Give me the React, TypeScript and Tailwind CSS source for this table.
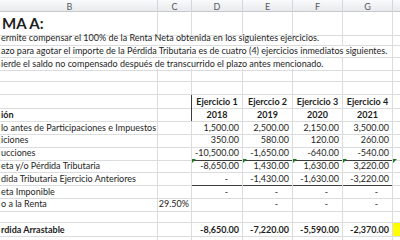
import React from 'react'

const grid = 'grid grid-cols-[176px_34px_51px_50px_50px_50px_50px]'
const line = 'border-[#dadcdd]'
const dark = 'border-[#3c3c3c]'

type CellProps = {
  children?: React.ReactNode
  className?: string
}

function Cell({ children, className = '' }: CellProps) {
  return (
    <div className={`relative flex items-center whitespace-nowrap border-r border-b ${line} ${className}`}>
      {children}
    </div>
  )
}

function Tri() {
  return <span className="absolute left-0 top-0 h-0 w-0 border-t-[4px] border-r-[4px] border-t-[#1f7a1f] border-r-transparent" />
}

const labelPad = 'pl-[19px]'

type Row = {
  label?: string
  bold?: boolean
  c?: string
  vals: string[]
  h?: string
  darkBottom?: boolean
  tri?: boolean
}

const rows: Row[] = [
  { label: 'lo antes de Participaciones e Impuestos', vals: ['1,500.00', '2,500.00', '2,150.00', '3,500.00'] },
  { label: 'iciones', vals: ['350.00', '580.00', '120.00', '260.00'] },
  { label: 'ucciones', vals: ['-10,500.00', '-1,650.00', '-640.00', '-540.00'], darkBottom: true },
  { label: 'eta y/o Pérdida Tributaria', vals: ['-8,650.00', '1,430.00', '1,630.00', '3,220.00'], tri: true },
  { label: 'dida Tributaria Ejercicio Anteriores', vals: ['-', '-1,430.00', '-1,630.00', '-3,220.00'], darkBottom: true },
  { label: 'eta Imponible', vals: ['-', '-', '-', '-'] },
  { label: 'o a la Renta', c: '29.50%', vals: ['', '-', '-', '-'] },
  { vals: ['', '', '', ''] },
  { label: 'rdida Arrastable', bold: true, vals: ['-8,650.00', '-7,220.00', '-5,590.00', '-2,370.00'], h: 'yellow' },
]

function Value({ v, className = '' }: { v: string; className?: string }) {
  const pad = v === '-' ? 'pr-[14px]' : 'pr-[3px]'
  return <Cell className={`justify-end ${pad} ${className}`}>{v}</Cell>
}

export default function App() {
  const headers = ['B', 'C', 'D', 'E', 'F', 'G', '']
  return (
    <div className="w-[400px] h-[240px] overflow-hidden bg-white font-['Lato','Liberation_Sans',sans-serif] text-[9px] text-[#1e1e1e]">
      <div className="ml-[-18px]">
        {/* column letters */}
        <div className={`${grid} h-[12px] bg-gradient-to-b from-[#f9fafb] to-[#e8eaed] border-b border-[#c6c9ce]`}>
          {headers.map((h, i) => (
            <div key={i} className="flex items-center justify-center border-r border-[#d3d6da] text-[9px] text-[#55595f]">
              {h}
            </div>
          ))}
        </div>

        {/* title */}
        <div className={`${grid} h-[19px]`}>
          <Cell className={`${labelPad} text-[15px] font-bold`}>
            <span className="pl-[1px]">MA A:</span>
          </Cell>
          <Cell />
          <Cell />
          <Cell />
          <Cell />
          <Cell />
          <Cell />
        </div>

        {/* notes */}
        <div className={`${grid} h-[12.8px]`}>
          <Cell className={`${labelPad} col-span-5`}>ermite compensar el 100% de la Renta Neta obtenida en los siguientes ejercicios.</Cell>
          <Cell />
          <Cell />
        </div>
        <div className={`${grid} h-[12.8px]`}>
          <Cell className={`${labelPad} col-span-6`}>azo para agotar el importe de la Pérdida Tributaria es de cuatro (4) ejercicios inmediatos siguientes.</Cell>
          <Cell />
        </div>
        <div className={`${grid} h-[12.8px]`}>
          <Cell className={`${labelPad} col-span-5`}>ierde el saldo no compensado después de transcurrido el plazo antes mencionado.</Cell>
          <Cell />
          <Cell />
        </div>

        {/* blank rows */}
        <div className={`${grid} h-[12.8px]`}>
          {headers.map((h, i) => (
            <Cell key={i} />
          ))}
        </div>
        <div className={`${grid} h-[12.8px]`}>
          <Cell />
          <Cell />
          <Cell className={dark} />
          <Cell className={dark} />
          <Cell className={dark} />
          <Cell className={dark} />
          <Cell />
        </div>

        {/* table head */}
        <div className={`${grid} h-[12.8px] font-bold`}>
          <Cell />
          <Cell className="border-r-[#3c3c3c]" />
          {['Ejercicio 1', 'Ejerccio 2', 'Ejercicio 3', 'Ejercicio 4'].map((t) => (
            <Cell key={t} className={`justify-center ${dark}`}>
              {t}
            </Cell>
          ))}
          <Cell />
        </div>
        <div className={`${grid} h-[12.8px] font-bold`}>
          <Cell className={labelPad}>ión</Cell>
          <Cell className="border-r-[#3c3c3c]" />
          {['2018', '2019', '2020', '2021'].map((t) => (
            <Cell key={t} className={`justify-center ${dark}`}>
              {t}
            </Cell>
          ))}
          <Cell />
        </div>

        {/* data */}
        {rows.map((r, i) => (
          <div key={i} className={`${grid} h-[12.8px] ${r.bold ? 'font-bold' : ''}`}>
            <Cell className={labelPad}>{r.label}</Cell>
            <Cell className="justify-end pr-[2px]">{r.c}</Cell>
            {r.vals.map((v, j) => (
              <div key={j} className="contents">
                {r.tri ? (
                  <Cell className="justify-end pr-[3px]">
                    <Tri />
                    {v}
                  </Cell>
                ) : (
                  <Value v={v} className={r.darkBottom ? 'border-b-[#3c3c3c]' : ''} />
                )}
              </div>
            ))}
            <Cell className={r.h === 'yellow' ? 'bg-[#ffff00]' : ''}>{r.tri ? <Tri /> : null}</Cell>
          </div>
        ))}
        <div className={`${grid} h-[12.8px]`}>
          {headers.map((h, i) => (
            <Cell key={i} />
          ))}
        </div>
      </div>
    </div>
  )
}
